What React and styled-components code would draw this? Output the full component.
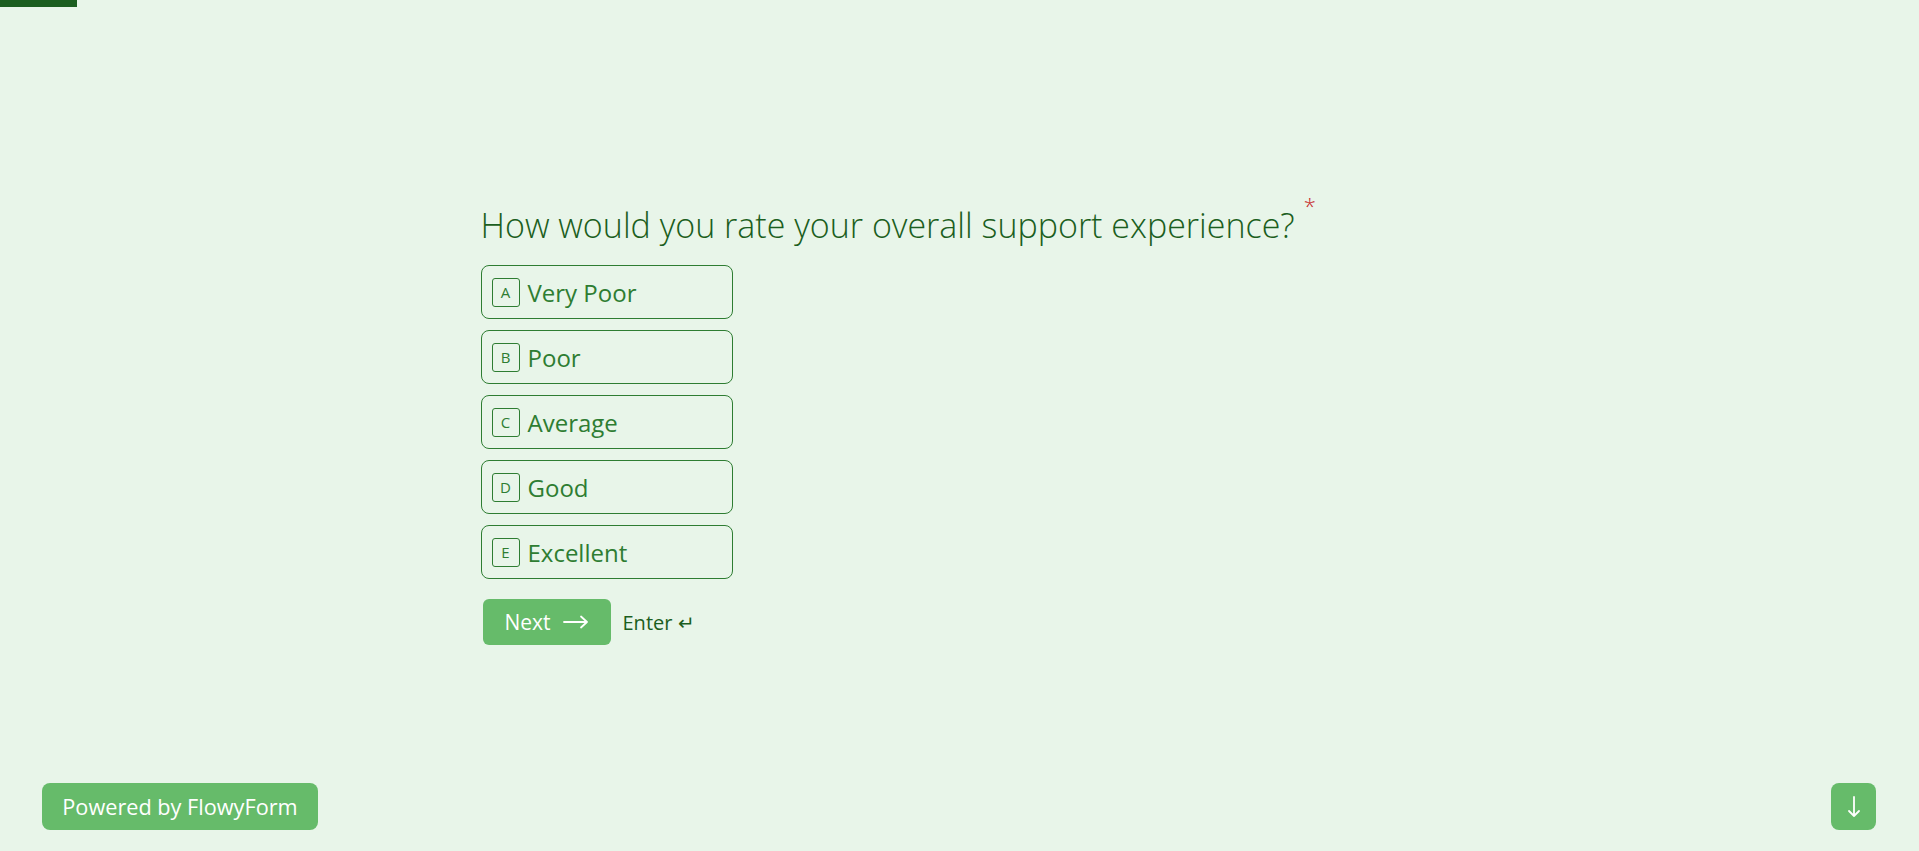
import React from 'react'
import styled, { createGlobalStyle } from 'styled-components'

const GlobalStyle = createGlobalStyle`
  html, body {
    margin: 0;
    padding: 0;
    background: #e8f5e9;
    font-family: "Open Sans", "Noto Sans", sans-serif;
  }
`

const Page = styled.div`
  min-height: 851px;
  height: 100vh;
  display: flex;
  align-items: center;
  justify-content: center;
  box-sizing: border-box;
  padding-bottom: 4px;
`

const Progress = styled.div`
  position: fixed;
  top: 0;
  left: 0;
  height: 7px;
  width: 77px;
  background: #1b5e20;
`

const Form = styled.div`
  width: 958px;
  display: flex;
  flex-direction: column;
  align-items: flex-start;
`

const Question = styled.h1`
  margin: 0 0 17px;
  font-size: 34px;
  line-height: 46px;
  font-weight: 300;
  color: #1b5e20;
  position: relative;
`

const Required = styled.span`
  color: #c62828;
  font-size: 22px;
  position: absolute;
  top: -20px;
  margin-left: 9px;
`

const Options = styled.div`
  display: flex;
  flex-direction: column;
  gap: 11px;
`

const Option = styled.button`
  width: 252px;
  height: 54px;
  box-sizing: border-box;
  display: flex;
  align-items: center;
  gap: 8px;
  padding: 0 10px;
  background: transparent;
  border: 1px solid #2e7d32;
  border-radius: 8px;
  color: #2e7d32;
  font-family: inherit;
  font-size: 24px;
  font-weight: 400;
  cursor: pointer;
`

const Key = styled.span`
  min-width: 28px;
  height: 29px;
  box-sizing: border-box;
  display: flex;
  align-items: center;
  justify-content: center;
  border: 1px solid #2e7d32;
  border-radius: 3px;
  font-size: 15px;
  font-weight: 500;
`

const Actions = styled.div`
  display: flex;
  align-items: center;
  gap: 12px;
  margin-top: 20px;
  margin-left: 2px;
`

const NextButton = styled.button`
  height: 46px;
  width: 128px;
  border: none;
  border-radius: 6px;
  background: #66bb6a;
  color: #fff;
  font-family: inherit;
  font-size: 21px;
  display: flex;
  align-items: center;
  justify-content: center;
  gap: 12px;
  cursor: pointer;
`

const Hint = styled.span`
  color: #1b5e20;
  font-size: 20px;
`

const Badge = styled.a`
  position: fixed;
  left: 42px;
  bottom: 21px;
  height: 47px;
  width: 276px;
  box-sizing: border-box;
  display: flex;
  align-items: center;
  justify-content: center;
  background: #66bb6a;
  border-radius: 8px;
  color: #fff;
  font-size: 21.7px;
  text-decoration: none;
`

const ScrollButton = styled.button`
  position: fixed;
  right: 43px;
  bottom: 21px;
  width: 45px;
  height: 47px;
  border: none;
  border-radius: 8px;
  background: #66bb6a;
  display: flex;
  align-items: center;
  justify-content: center;
  padding: 0;
`

const options = ['Very Poor', 'Poor', 'Average', 'Good', 'Excellent']

export default function App() {
  return (
    <>
      <GlobalStyle />
      <Progress />
      <Page>
        <Form>
          <Question>
            How would you rate your overall support experience?
            <Required>*</Required>
          </Question>
          <Options>
            {options.map((label, i) => (
              <Option key={label}>
                <Key>{String.fromCharCode(65 + i)}</Key>
                {label}
              </Option>
            ))}
          </Options>
          <Actions>
            <NextButton>
              Next
              <svg width="26" height="14" viewBox="0 0 26 14" fill="none" stroke="#fff" strokeWidth="1.8" strokeLinecap="round" strokeLinejoin="round">
                <path d="M1 7h23M18 1.5 24 7l-6 5.5" />
              </svg>
            </NextButton>
            <Hint>Enter ↵</Hint>
          </Actions>
        </Form>
      </Page>
      <Badge>Powered by FlowyForm</Badge>
      <ScrollButton>
        <svg width="14" height="24" viewBox="0 0 14 24" fill="none" stroke="#fff" strokeWidth="1.8" strokeLinecap="round" strokeLinejoin="round">
          <path d="M7 2v19M2 16l5 5 5-5" />
        </svg>
      </ScrollButton>
    </>
  )
}
